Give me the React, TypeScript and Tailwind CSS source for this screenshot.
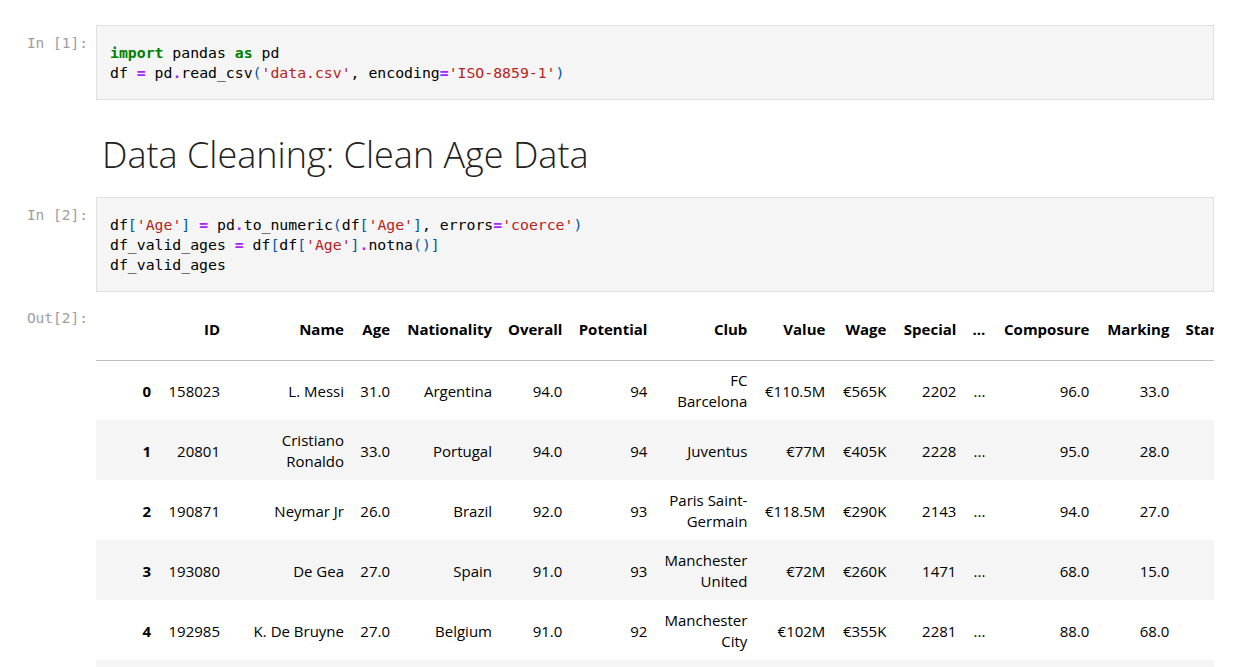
import React from 'react';

type Tok = [string, string?];

const C: Record<string, string> = {
  kw: 'font-bold text-[#008000]',
  op: 'font-bold text-[#aa22ff]',
  str: 'text-[#ba2121]',
  br: 'text-[#0055aa]',
};

const cell1: Tok[][] = [
  [['import', 'kw'], [' pandas '], ['as', 'kw'], [' pd']],
  [
    ['df '], ['=', 'op'], [' pd'], ['.', 'op'], ['read_csv'], ['(', 'br'], ["'data.csv'", 'str'],
    [', encoding'], ['=', 'op'], ["'ISO-8859-1'", 'str'], [')', 'br'],
  ],
];

const cell2: Tok[][] = [
  [
    ['df'], ['[', 'br'], ["'Age'", 'str'], [']', 'br'], [' '], ['=', 'op'], [' pd'], ['.', 'op'],
    ['to_numeric'], ['(', 'br'], ['df'], ['[', 'br'], ["'Age'", 'str'], [']', 'br'], [', errors'],
    ['=', 'op'], ["'coerce'", 'str'], [')', 'br'],
  ],
  [
    ['df_valid_ages '], ['=', 'op'], [' df'], ['[', 'br'], ['df'], ['[', 'br'], ["'Age'", 'str'],
    [']', 'br'], ['.', 'op'], ['notna'], ['()', 'br'], [']', 'br'],
  ],
  [['df_valid_ages']],
];

const mono = "font-['DejaVu_Sans_Mono','Liberation_Mono',monospace]";

function Prompt({ label }: { label: string }) {
  return (
    <div className={`w-[96px] shrink-0 pr-[8px] pt-[8px] text-right text-[14.5px] leading-[20px] text-[#9e9e9e] ${mono}`}>
      {label}
    </div>
  );
}

function CodeCell({ label, lines }: { label: string; lines: Tok[][] }) {
  return (
    <div className="flex">
      <Prompt label={label} />
      <div className="mr-[29px] flex-1 border border-[#e0e0e0] bg-[#f5f5f5] pl-[13px] pt-[17px] pb-[16px]">
        <pre className={`text-[14.8px] leading-[20px] text-[#000] ${mono}`}>
          {lines.map((line, i) => (
            <div key={i}>
              {line.map(([t, k], j) => (
                <span key={j} className={k ? C[k] : ''}>
                  {t}
                </span>
              ))}
            </div>
          ))}
        </pre>
      </div>
    </div>
  );
}

const cols = [
  { h: '', w: 'w-[63px]' },
  { h: 'ID', w: 'w-[69px]' },
  { h: 'Name', w: 'w-[124px]' },
  { h: 'Age', w: 'w-[46px]' },
  { h: 'Nationality', w: 'w-[102px]' },
  { h: 'Overall', w: 'w-[70px]' },
  { h: 'Potential', w: 'w-[85px]' },
  { h: 'Club', w: 'w-[100px]' },
  { h: 'Value', w: 'w-[78px]' },
  { h: 'Wage', w: 'w-[61px]' },
  { h: 'Special', w: 'w-[70px]' },
  { h: '...', w: 'w-[29px]' },
  { h: 'Composure', w: 'w-[104px]' },
  { h: 'Marking', w: 'w-[80px]' },
  { h: 'StandingTackle', w: '' },
  { h: 'SlidingTackle', w: '' },
];

const rows = [
  ['0', '158023', 'L. Messi', '31.0', 'Argentina', '94.0', '94', 'FC\nBarcelona', '€110.5M', '€565K', '2202', '...', '96.0', '33.0', '28.0', '26.0'],
  ['1', '20801', 'Cristiano\nRonaldo', '33.0', 'Portugal', '94.0', '94', 'Juventus', '€77M', '€405K', '2228', '...', '95.0', '28.0', '31.0', '23.0'],
  ['2', '190871', 'Neymar Jr', '26.0', 'Brazil', '92.0', '93', 'Paris Saint-\nGermain', '€118.5M', '€290K', '2143', '...', '94.0', '27.0', '24.0', '33.0'],
  ['3', '193080', 'De Gea', '27.0', 'Spain', '91.0', '93', 'Manchester\nUnited', '€72M', '€260K', '1471', '...', '68.0', '15.0', '21.0', '13.0'],
  ['4', '192985', 'K. De Bruyne', '27.0', 'Belgium', '91.0', '92', 'Manchester\nCity', '€102M', '€355K', '2281', '...', '88.0', '68.0', '58.0', '51.0'],
  ['5', '183277', 'E. Hazard', '27.0', 'Belgium', '91.0', '91', 'Chelsea', '€93M', '€340K', '2142', '...', '91.0', '34.0', '27.0', '22.0'],
];

export default function App() {
  return (
    <div className="min-h-screen overflow-hidden bg-white pt-[25px] font-['Open_Sans','Noto_Sans',sans-serif]">
      <CodeCell label="In [1]:" lines={cell1} />

      <div className="ml-[96px] mt-[35px] mb-[22px] pl-[6px]">
        <h1 className="text-[36px] font-light leading-[40px] text-[#212121]">Data Cleaning: Clean Age Data</h1>
      </div>

      <CodeCell label="In [2]:" lines={cell2} />

      <div className="mt-[8px] flex">
        <Prompt label="Out[2]:" />
        <div className="mr-[29px] flex-1 overflow-hidden">
          <table className="w-max border-collapse text-[15px] leading-[21px] text-[#000]">
            <thead>
              <tr className="h-[60px] border-b border-[#bdbdbd]">
                {cols.map((c, i) => (
                  <th key={i} className={`${c.w} whitespace-pre px-[8px] text-right align-middle font-bold`}>
                    {c.h}
                  </th>
                ))}
              </tr>
            </thead>
            <tbody>
              {rows.map((r, i) => (
                <tr key={i} className={`h-[60px] ${i % 2 === 1 ? 'bg-[#f5f5f5]' : 'bg-white'}`}>
                  {r.map((v, j) => (
                    <td
                      key={j}
                      className={`${cols[j].w} whitespace-pre px-[8px] pt-[2px] pb-0 text-right align-middle ${j === 0 ? 'font-bold' : ''}`}
                    >
                      {v}
                    </td>
                  ))}
                </tr>
              ))}
            </tbody>
          </table>
        </div>
      </div>
    </div>
  );
}
